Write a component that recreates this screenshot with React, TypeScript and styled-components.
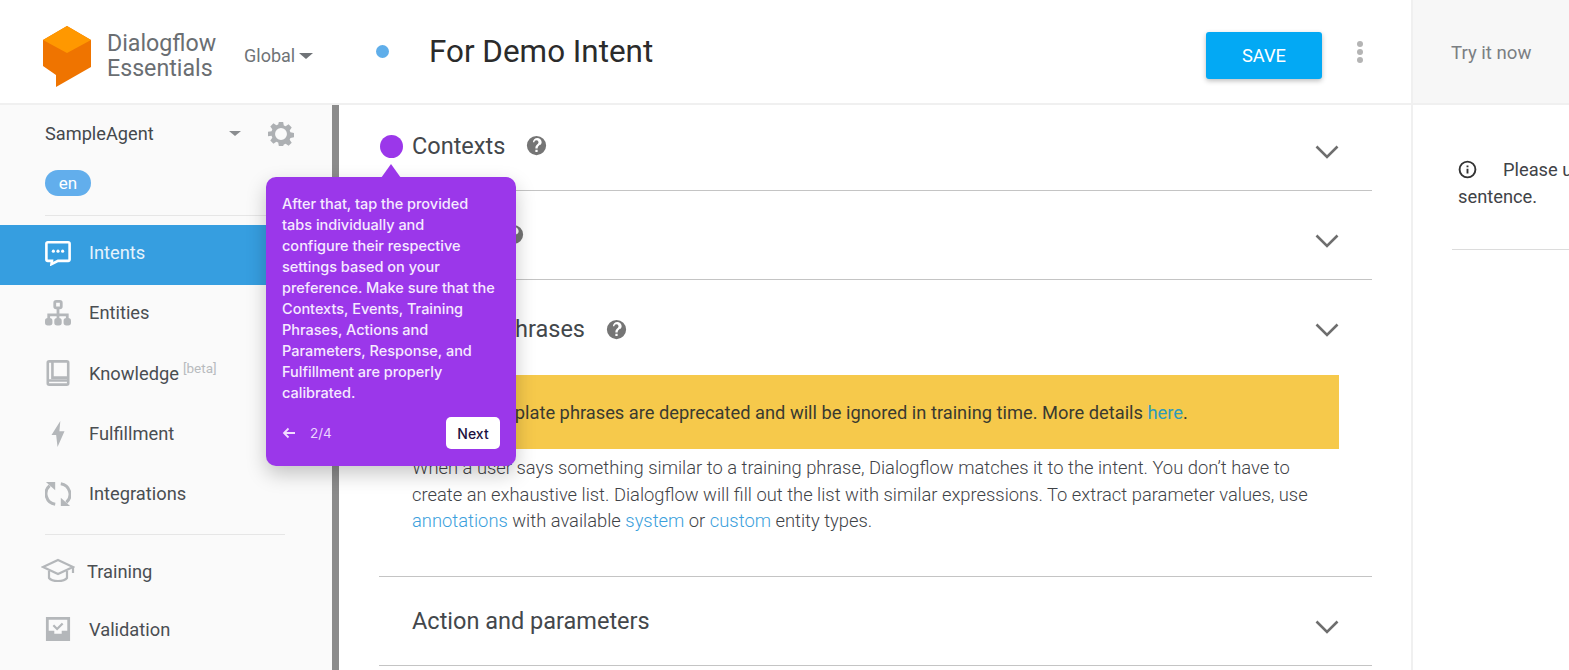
import React from "react";
import styled, { createGlobalStyle } from "styled-components";

const Global = createGlobalStyle`
  html, body { margin: 0; padding: 0; width: 1569px; height: 670px; overflow: hidden; background: #fff; }
  * { box-sizing: border-box; }
  body { font-family: Roboto, "Liberation Sans", sans-serif; }
  svg { flex: none; }
`;

const Page = styled.div`
  display: grid;
  grid-template-columns: 339px 1074px 156px;
  width: 1569px;
  height: 670px;
  overflow: hidden;
  position: relative;
`;

const Sidebar = styled.aside`
  background: #fafafa;
  display: flex;
  flex-direction: column;
  height: 670px;
  position: relative;
`;

const Brand = styled.div`
  height: 105px;
  border-bottom: 2px solid #f0f0f0;
  background: #fff;
  display: flex;
  align-items: flex-start;
  padding: 26px 0 0 43px;
`;

const BrandName = styled.div`
  margin: 5px 0 0 14px;
  font-size: 23.2px;
  line-height: 25px;
  color: #6a6e72;
  width: 137px;
`;

const Region = styled.div`
  margin-top: 18px;
  display: flex;
  align-items: center;
  gap: 4px;
  font-size: 18px;
  line-height: 24px;
  color: #6f7377;
`;

const Caret = styled.span<{ $c: string; $w: number }>`
  display: inline-block;
  width: 0;
  height: 0;
  border-left: ${(p) => p.$w}px solid transparent;
  border-right: ${(p) => p.$w}px solid transparent;
  border-top: ${(p) => Math.round(p.$w * 0.75)}px solid ${(p) => p.$c};
`;

const SideBody = styled.div`
  flex: 1;
  position: relative;
  padding-right: 7px;
  border-right: 7px solid #8b8b8b;
`;

const AgentRow = styled.div`
  display: flex;
  align-items: center;
  height: 57px;
  padding: 0 31px 0 45px;
  font-size: 18.2px;
  color: #44484c;
`;

const AgentName = styled.span`
  flex: 1;
`;

const GearWrap = styled.span`
  margin-left: 27px;
  display: flex;
`;

const LangChip = styled.div`
  margin: 8px 0 0 45px;
  width: 46px;
  height: 26px;
  border-radius: 13px;
  background: #62aeec;
  color: #fff;
  font-size: 17px;
  display: flex;
  align-items: center;
  justify-content: center;
`;

const Rule = styled.div<{ $mt: number }>`
  height: 1px;
  background: #e6e6e6;
  margin: ${(p) => p.$mt}px 40px 0 45px;
`;

const Nav = styled.nav`
  display: flex;
  flex-direction: column;
  margin-top: 9px;
`;

const NavItem = styled.div<{ $active?: boolean }>`
  height: 60.3px;
  padding-bottom: 5px;
  display: flex;
  align-items: center;
  gap: 18px;
  padding-left: 45px;
  font-size: 18.3px;
  color: ${(p) => (p.$active ? "#e6f3fc" : "#4a4e52")};
  background: ${(p) => (p.$active ? "#369ee0" : "transparent")};
`;

const Beta = styled.sup`
  font-size: 13.5px;
  color: #b8bbbe;
  margin-left: 4px;
  vertical-align: 7px;
  line-height: 0;
`;

const SubNav = styled.div`
  display: flex;
  flex-direction: column;
  margin-top: 7px;
`;

const SubItem = styled.div<{ $gap: number; $pl: number }>`
  height: 58px;
  display: flex;
  align-items: center;
  gap: ${(p) => p.$gap}px;
  padding-left: ${(p) => p.$pl}px;
  font-size: 18.3px;
  color: #4a4e52;
`;

const Main = styled.main`
  display: flex;
  flex-direction: column;
  height: 670px;
  border-right: 2px solid #f0f0f0;
`;

const TopBar = styled.div`
  height: 105px;
  border-bottom: 2px solid #f0f0f0;
  display: flex;
  align-items: flex-start;
  padding-left: 37px;
`;

const Dot = styled.span`
  width: 13px;
  height: 13px;
  margin-top: 45px;
  background: #5faeea;
  border-radius: 50%;
`;

const Title = styled.h1`
  margin: 30px 0 0 40px;
  flex: 1;
  font-size: 31.4px;
  line-height: 44px;
  font-weight: 400;
  color: #2b2b2b;
`;

const SaveButton = styled.button`
  margin-top: 32px;
  width: 116px;
  height: 47px;
  border: 0;
  border-radius: 3px;
  background: #03a9f4;
  color: #fff;
  font: 400 18.3px Roboto, sans-serif;
  box-shadow: 0 2px 5px rgba(0,0,0,.26);
`;

const Kebab = styled.span`
  margin: 41px 48px 0 35px;
  display: flex;
  flex-direction: column;
  gap: 2px;
  & > i { width: 6px; height: 6px; border-radius: 50%; background: #b4b4b4; display: block; }
`;

const Sections = styled.div`
  padding-left: 40px;
  padding-right: 39px;
`;

const Section = styled.section<{ $h: number }>`
  border-bottom: 1px solid #c4c4c4;
  height: ${(p) => p.$h}px;
`;

const SectionHead = styled.div<{ $h: number }>`
  height: ${(p) => p.$h}px;
  display: flex;
  align-items: center;
  padding-left: 33px;
  padding-right: 33px;
  font-size: 23.5px;
  color: #43474b;
`;

const SectionTitle = styled.span<{ $dy: number }>`
  margin-right: 21px;
  margin-top: ${(p) => Math.max(0, p.$dy * 2)}px;
  margin-bottom: ${(p) => Math.max(0, -p.$dy * 2)}px;
`;

const HelpWrap = styled.span<{ $dy: number }>`
  display: flex;
  margin-top: ${(p) => Math.max(0, p.$dy * 2)}px;
  margin-bottom: ${(p) => Math.max(0, -p.$dy * 2)}px;
`;

const ChevronWrap = styled.span<{ $dy: number }>`
  display: flex;
  margin-left: auto;
  margin-top: ${(p) => p.$dy * 2}px;
`;

const Notice = styled.div`
  width: 960px;
  height: 74px;
  background: #f6c94b;
  padding: 0 0 0 100px;
  display: flex;
  align-items: center;
  font-size: 18.3px;
  color: #3a3a30;
  white-space: pre;
`;

const Link = styled.a<{ $c?: string }>`
  color: ${(p) => p.$c ?? "#3ba0dc"};
`;

const Para = styled.p`
  margin: 6px 0 0 33px;
  width: 930px;
  font-size: 18.36px;
  line-height: 26.500px;
  font-weight: 300;
  color: #3f4347;
  white-space: pre-line;
`;

const Right = styled.aside`
  display: flex;
  flex-direction: column;
`;

const TryBar = styled.div`
  height: 105px;
  background: #f7f7f7;
  border-bottom: 2px solid #f0f0f0;
  padding: 42px 0 0 38px;
  font-size: 18.6px;
  line-height: 22px;
  color: #7b7f83;
`;

const Hint = styled.div`
  margin-left: 39px;
  padding: 51px 0 0 6px;
  height: 145px;
  border-bottom: 1px solid #dcdcdc;
  font-size: 18.3px;
  line-height: 27px;
  color: #3f4347;
  white-space: nowrap;
  overflow: hidden;
`;

const HintLine = styled.div`
  display: flex;
  align-items: center;
  gap: 26px;
`;

const Target = styled.span`
  position: absolute;
  left: 380px;
  top: 135px;
  width: 23px;
  height: 23px;
  border-radius: 50%;
  background: #9b37ea;
`;

const Pop = styled.div`
  position: absolute;
  left: 266px;
  top: 177px;
  width: 250px;
  height: 289px;
  padding: 16px 16px 0;
  border-radius: 10px;
  background: #9b37ea;
  box-shadow: 0 8px 20px rgba(0,0,0,.22);
  color: #f6eaff;
  &::before {
    content: "";
    position: absolute;
    left: 115px;
    top: -13px;
    border-left: 10px solid transparent;
    border-right: 10px solid transparent;
    border-bottom: 14px solid #9b37ea;
  }
`;

const PopText = styled.div`
  font-family: Inter, "Open Sans", sans-serif;
  font-size: 14.5px;
  font-weight: 500;
  line-height: 21px;
  white-space: pre-line;
`;

const PopFoot = styled.div`
  margin-top: 14px;
  display: flex;
  align-items: center;
  font-size: 13.5px;
`;

const Step = styled.span`
  margin-left: 14px;
  flex: 1;
  font-family: Inter, sans-serif;
  color: #ecd4ff;
`;

const NextBtn = styled.button`
  width: 54px;
  height: 32px;
  border: 0;
  border-radius: 5px;
  background: #fff;
  color: #1c1140;
  font: 500 14px Inter, sans-serif;
`;

const Cube = () => (
  <svg width="50" height="62" viewBox="0 0 50 62">
    <path d="M24 0 L48 14 V41 L13 61 V49 L0 40 V14 Z" fill="#ef7400" />
    <path d="M24 0 L48 14 L24 27 L0 14 Z" fill="#ff9800" />
  </svg>
);

const Gear = () => (
  <svg width="26" height="26" viewBox="0 0 24 24" fill="#adb0b3">
    <path fillRule="evenodd" d="M10 1h4l.6 3.200 1.700.7 2.700-1.800 2.900 2.900-1.900 2.700.7 1.700 3.300.6v4l-3.300.6-.7 1.700 1.900 2.700-2.900 2.900-2.700-1.900-1.700.7L14 23h-4l-.6-3.200-1.700-.7-2.700 1.900-2.900-2.900 1.900-2.700-.7-1.700L0 14v-4l3.300-.6.7-1.700-1.900-2.700L5 2.100l2.700 1.800 1.700-.7zM12 6.500a5.500 5.500 0 1 0 0 11 5.500 5.500 0 0 0 0-11z" />
  </svg>
);

const IntentIcon = () => (
  <svg width="26" height="26" viewBox="0 0 28 28">
    <path d="M3 2.500h22a1.500 1.500 0 0 1 1.500 1.500v17a1.500 1.500 0 0 1-1.500 1.500H14l-7 3.500 .5-3.500H3A1.500 1.500 0 0 1 1.500 21V4A1.500 1.500 0 0 1 3 2.500z" fill="none" stroke="#fff" strokeWidth="2.800" />
    <circle cx="9" cy="12" r="1.700" fill="#fff" /><circle cx="14" cy="12" r="1.700" fill="#fff" /><circle cx="19" cy="12" r="1.700" fill="#fff" />
  </svg>
);

const EntityIcon = () => (
  <svg width="26" height="26" viewBox="0 0 28 28" fill="none" stroke="#b4b7ba" strokeWidth="3">
    <rect x="10.500" y="1.500" width="7" height="7" rx="1.500" />
    <path d="M14 9v6M4 20v-4h20v4M14 15v5" />
    <rect x="1.500" y="21" width="5" height="5" rx="1.500" fill="#b4b7ba" />
    <rect x="11.500" y="21" width="5" height="5" rx="1.500" fill="#b4b7ba" />
    <rect x="21.500" y="21" width="5" height="5" rx="1.500" fill="#b4b7ba" />
  </svg>
);

const BookIcon = () => (
  <svg width="26" height="26" viewBox="0 0 28 28" fill="none" stroke="#b4b7ba" strokeWidth="2.800">
    <rect x="3" y="1.500" width="22" height="25" rx="1.500" />
    <path d="M8 2v17h17M3.500 22h21" />
  </svg>
);

const BoltIcon = () => (
  <svg width="26" height="26" viewBox="0 0 28 28">
    <path d="M16.500 0 L7 15 H12 L13.500 28 L21 11 H15.500 Z" fill="#b4b7ba" />
  </svg>
);

const SyncIcon = () => (
  <svg width="26" height="26" viewBox="0 0 28 28" fill="none" stroke="#b4b7ba" strokeWidth="3.200">
    <path d="M17 3A11.500 11.500 0 0 1 23 23" />
    <path d="M11 25A11.500 11.500 0 0 1 5 5" />
    <path d="M1 1h10v9z" fill="#b4b7ba" stroke="none" />
    <path d="M27 27h-10v-9z" fill="#b4b7ba" stroke="none" />
  </svg>
);

const CapIcon = () => (
  <svg width="34" height="26" viewBox="0 0 34 26" fill="none" stroke="#b4b7ba" strokeWidth="2.200">
    <path d="M17 2 L32 9 L17 16 L2 9 Z" />
    <path d="M8 13v7c3 4 15 4 18 0v-7M32 9v6" />
  </svg>
);

const InboxIcon = () => (
  <svg width="26" height="26" viewBox="0 0 28 28">
    <path fillRule="evenodd" fill="#b4b7ba" d="M1 1h26v26H1zM4 4v12h6v3h8v-3h6V4z" />
    <path d="M9 10l4 4 6-6" fill="none" stroke="#b4b7ba" strokeWidth="2.400" />
  </svg>
);

const Help = () => (
  <svg width="21" height="21" viewBox="0 0 24 24">
    <path fill="#757575" d="M12 1a11 11 0 1 0 0 22 11 11 0 0 0 0-22zm1.300 18.500h-2.600v-2.600h2.600zm2.500-8.300-1.100 1.100c-.9.900-1.400 1.600-1.400 3.200h-2.600v-.6c0-1.300.5-2.500 1.400-3.400l1.500-1.600c.5-.4.700-1 .7-1.600a2.400 2.400 0 0 0-4.800 0H7.900a5 5 0 0 1 10 0c0 1.100-.5 2.100-1.100 2.900z" />
  </svg>
);

const Chevron = () => (
  <svg width="24" height="14" viewBox="0 0 24 14" fill="none" stroke="#6e6e6e" strokeWidth="2.600">
    <path d="M1.500 1.500 L12 12 L22.500 1.500" />
  </svg>
);

const Info = () => (
  <svg width="19" height="19" viewBox="0 0 24 24" fill="none" stroke="#333" strokeWidth="2.400">
    <circle cx="12" cy="12" r="10" />
    <path d="M12 11v6M12 7v2" />
  </svg>
);

const Arrow = () => (
  <svg width="14" height="12" viewBox="0 0 14 12" fill="none" stroke="#f1dcff" strokeWidth="1.800">
    <path d="M13 6H2M6.500 1.500 2 6l4.500 4.500" />
  </svg>
);

type HeadProps = { title: string; h: number; help?: boolean; ty: number; cy: number };

const Head = ({ title, h, help, ty, cy }: HeadProps) => (
  <SectionHead $h={h}>
    <SectionTitle $dy={ty}>{title}</SectionTitle>
    {help && <HelpWrap $dy={ty}><Help /></HelpWrap>}
    <ChevronWrap $dy={cy}><Chevron /></ChevronWrap>
  </SectionHead>
);

export default function App() {
  return (
    <Page>
      <Global />
      <Sidebar>
        <Brand>
          <Cube />
          <BrandName>Dialogflow Essentials</BrandName>
          <Region>Global <Caret $c="#6f7377" $w={7.5} /></Region>
        </Brand>
        <SideBody>
          <AgentRow>
            <AgentName>SampleAgent</AgentName>
            <Caret $c="#8a8d90" $w={6} />
            <GearWrap><Gear /></GearWrap>
          </AgentRow>
          <LangChip>en</LangChip>
          <Rule $mt={19} />
          <Nav>
            <NavItem $active><IntentIcon />Intents</NavItem>
            <NavItem><EntityIcon />Entities</NavItem>
            <NavItem><BookIcon /><span>Knowledge<Beta>[beta]</Beta></span></NavItem>
            <NavItem><BoltIcon />Fulfillment</NavItem>
            <NavItem><SyncIcon />Integrations</NavItem>
          </Nav>
          <Rule $mt={8} />
          <SubNav>
            <SubItem $gap={12} $pl={41}><CapIcon />Training</SubItem>
            <SubItem $gap={18} $pl={45}><InboxIcon />Validation</SubItem>
          </SubNav>
        </SideBody>
      </Sidebar>

      <Main>
        <TopBar>
          <Dot />
          <Title>For Demo Intent</Title>
          <SaveButton>SAVE</SaveButton>
          <Kebab><i /><i /><i /></Kebab>
        </TopBar>
        <Sections>
          <Section $h={86}>
            <Head title="Contexts" h={85} help ty={-2} cy={4} />
          </Section>
          <Section $h={89}>
            <Head title="Events" h={88} help ty={-1} cy={5.5} />
          </Section>
          <Section $h={297}>
            <Head title="Training phrases" h={95} help ty={1.5} cy={2} />
            <Notice>Template phrases are deprecated and will be ignored in training time. More details <Link $c="#2f9bb8">here</Link>.</Notice>
            <Para>
              When a user says something similar to a training phrase, Dialogflow matches it to the intent. You don’t have to
              {"\n"}create an exhaustive list. Dialogflow will fill out the list with similar expressions. To extract parameter values, use
              {"\n"}<Link>annotations</Link> with available <Link>system</Link> or <Link>custom</Link> entity types.
            </Para>
          </Section>
          <Section $h={89}>
            <Head title="Action and parameters" h={88} ty={0} cy={6} />
          </Section>
        </Sections>
      </Main>

      <Right>
        <TryBar>Try it now</TryBar>
        <Hint>
          <HintLine><Info />Please use</HintLine>
          sentence.
        </Hint>
      </Right>

      <Target />
      <Pop>
        <PopText>{"After that, tap the provided\ntabs individually and\nconfigure their respective\nsettings based on your\npreference. Make sure that the\nContexts, Events, Training\nPhrases, Actions and\nParameters, Response, and\nFulfillment are properly\ncalibrated."}</PopText>
        <PopFoot>
          <Arrow />
          <Step>2/4</Step>
          <NextBtn>Next</NextBtn>
        </PopFoot>
      </Pop>
    </Page>
  );
}
